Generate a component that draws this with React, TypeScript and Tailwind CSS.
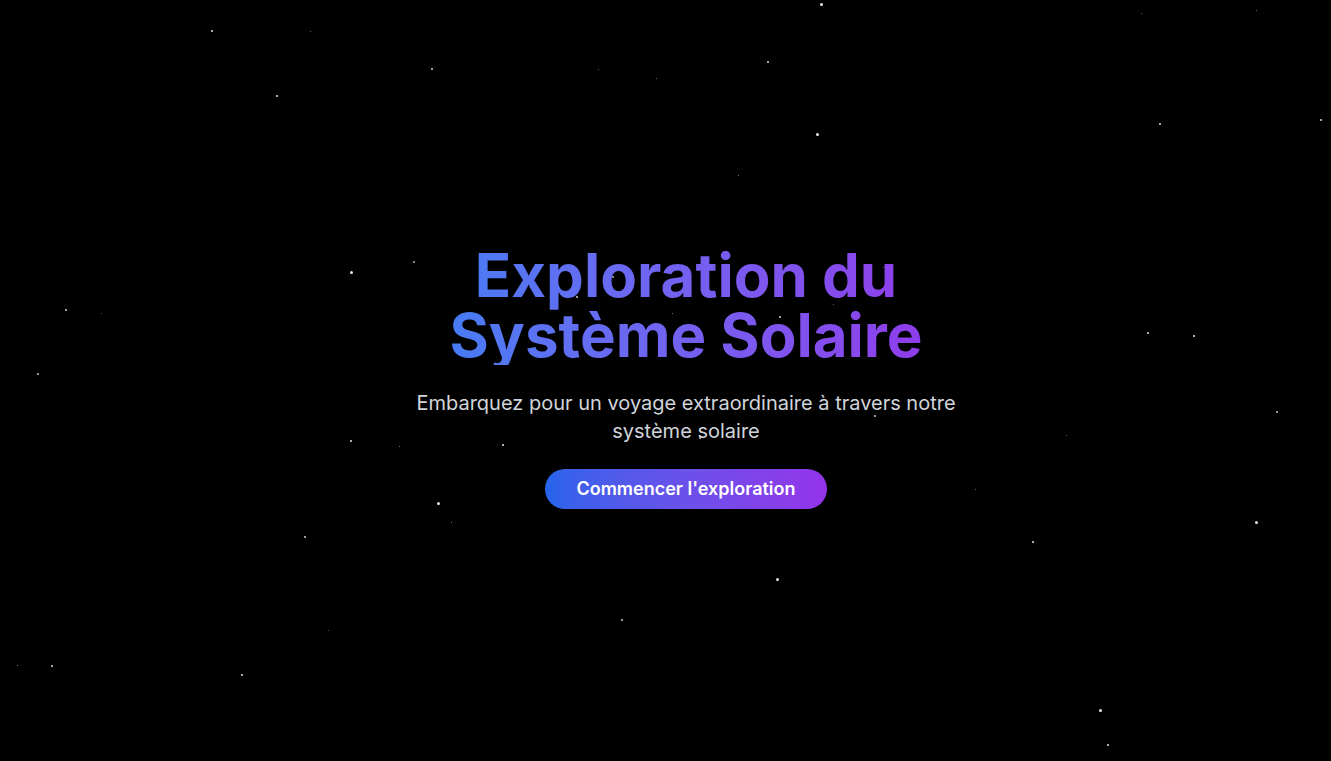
import React from "react";

type Star = [number, number, number, number];

// x, y, size, opacity
const STARS: Star[] = [
  [212, 31, 2, 0.9],
  [310, 31, 1, 0.5],
  [432, 69, 2, 0.85],
  [277, 96, 2, 0.9],
  [821, 4, 3, 0.9],
  [768, 62, 2, 0.85],
  [656, 78, 1, 0.5],
  [598, 69, 1, 0.5],
  [1141, 13, 1, 0.5],
  [1256, 10, 1, 0.5],
  [817, 134, 3, 0.9],
  [738, 175, 1, 0.6],
  [1160, 124, 2, 0.85],
  [1321, 120, 2, 0.85],
  [351, 272, 3, 0.9],
  [414, 262, 2, 0.7],
  [66, 310, 2, 0.85],
  [101, 313, 1, 0.4],
  [38, 374, 2, 0.8],
  [577, 297, 2, 0.8],
  [613, 277, 2, 0.7],
  [672, 313, 1, 0.6],
  [780, 317, 2, 0.8],
  [833, 304, 1, 0.5],
  [883, 267, 1, 0.5],
  [1148, 333, 2, 0.9],
  [1194, 336, 2, 0.9],
  [351, 441, 2, 0.9],
  [399, 446, 1, 0.6],
  [503, 445, 2, 0.9],
  [875, 416, 2, 0.8],
  [700, 438, 2, 0.8],
  [1066, 435, 1, 0.5],
  [1277, 412, 2, 0.75],
  [438, 503, 3, 0.9],
  [451, 522, 1, 0.6],
  [975, 489, 1, 0.5],
  [1256, 522, 3, 0.9],
  [1033, 542, 2, 0.9],
  [305, 537, 2, 0.8],
  [777, 579, 3, 0.9],
  [622, 620, 2, 0.8],
  [328, 630, 1, 0.4],
  [17, 665, 1, 0.7],
  [52, 666, 2, 0.85],
  [242, 675, 2, 0.9],
  [1100, 710, 3, 0.9],
  [1108, 745, 2, 0.9],
];

export default function App() {
  return (
    <div
      className="relative flex h-[761px] w-full items-center justify-center overflow-hidden bg-black pb-[8px] pl-[41px]"
      style={{ fontFamily: "Inter, 'Noto Sans', sans-serif" }}
    >
      <div className="absolute inset-0">
        {STARS.map(([x, y, s, o], i) => (
          <span
            key={i}
            className="absolute rounded-full bg-white"
            style={{
              left: x - s / 2,
              top: y - s / 2,
              width: s,
              height: s,
              opacity: o,
            }}
          />
        ))}
      </div>

      <div className="relative flex flex-col items-center text-center">
        <h1 className="mb-6 bg-gradient-to-r from-[#467cf4] to-[#8e3ceb] bg-clip-text text-6xl leading-none font-bold text-transparent">
          Exploration du
          <br />
          Système Solaire
        </h1>
        <p className="mb-6 max-w-xl text-xl leading-7 text-[#d1d5db]">
          Embarquez pour un voyage extraordinaire à travers notre système solaire
        </p>
        <button className="rounded-full bg-gradient-to-r from-[#2563eb] to-[#9333ea] px-[31px] py-1.5 text-lg leading-7 font-semibold text-white">
          Commencer l'exploration
        </button>
      </div>
    </div>
  );
}
